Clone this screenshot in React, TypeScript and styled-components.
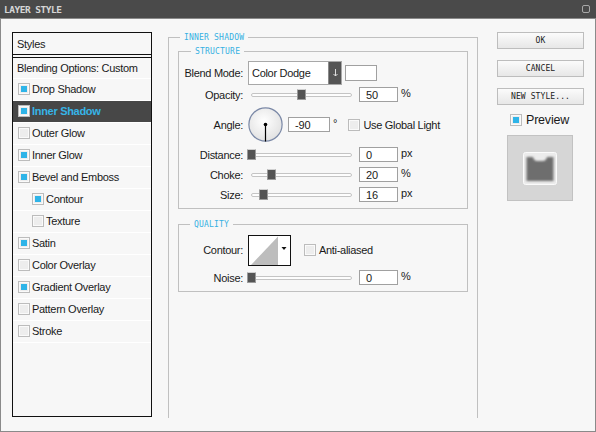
import React from "react";
import styled, { createGlobalStyle } from "styled-components";

const GlobalStyle = createGlobalStyle`
  html, body {
    margin: 0;
    padding: 0;
    background: #f7f7f7;
  }
  body {
    font-family: "Liberation Sans", Arial, sans-serif;
    font-size: 11px;
    color: #1a1a1a;
  }
`;

const Window = styled.div`
  width: 596px;
  height: 432px;
  display: flex;
  flex-direction: column;
  background: #f7f7f7;
`;

const TitleBar = styled.div`
  height: 18px;
  flex: none;
  background: #4a4a4a;
  border-bottom: 1px solid #8a8a8a;
  display: flex;
  align-items: center;
  justify-content: space-between;
  padding: 0 6px 0 4px;
`;

const TitleText = styled.span`
  font-family: "DejaVu Sans Mono", monospace;
  font-weight: bold;
  font-size: 9.5px;
  letter-spacing: -0.5px;
  color: #d6d6d6;
`;

const CloseIcon = styled.span`
  width: 6px;
  height: 6px;
  border: 1px solid #a8a8a8;
  border-radius: 2px;
`;

const Body = styled.div`
  flex: 1;
  display: flex;
  align-items: flex-start;
  border: 1px solid #8a8a8a;
  border-top: none;
  padding-left: 11px;
`;

const StylesPanel = styled.div`
  width: 138px;
  height: 383px;
  margin-top: 13px;
  border: 1px solid #111;
  flex: none;
`;

const PanelHeader = styled.div`
  height: 21px;
  display: flex;
  align-items: center;
  padding-left: 4px;
  border-bottom: 1px solid #111;
  margin-bottom: 2px;
  letter-spacing: -0.3px;
`;

const StyleRow = styled.div<{ $indent?: boolean; $selected?: boolean; $top?: boolean }>`
  height: 21px;
  display: flex;
  align-items: center;
  gap: 2px;
  padding-left: ${(p) => (p.$top ? 4 : p.$indent ? 19 : 5)}px;
  border-top: ${(p) => (p.$top ? "1px solid #111" : "none")};
  border-bottom: 1px solid #ffffff;
  background: ${(p) => (p.$selected ? "#474747" : "transparent")};
  color: ${(p) => (p.$selected ? "#36b4e6" : "#1a1a1a")};
  font-weight: ${(p) => (p.$selected ? "bold" : "normal")};
  letter-spacing: -0.3px;
  line-height: 12px;
  padding-bottom: 1px;
  box-sizing: border-box;
  height: 22px;
`;

const Check = styled.span<{ $checked?: boolean }>`
  width: 10px;
  height: 10px;
  flex: none;
  border: 1px solid #bcbcbc;
  background: #ededed;
  box-shadow: inset 0 0 0 1px #fafafa;
  display: flex;
  align-items: center;
  justify-content: center;
  &::after {
    content: "";
    width: 6px;
    height: 6px;
    background: ${(p) => (p.$checked ? "#2eb4e8" : "transparent")};
  }
`;

const Middle = styled.div`
  margin-left: 16px;
  margin-top: 18px;
  width: 290px;
  height: 367px;
  flex: none;
  border: 1px solid #c0c0c0;
  border-bottom: none;
  position: relative;
  padding: 13px 9px 0 9px;
`;

const Group = styled.div<{ $mt?: number }>`
  position: relative;
  border: 1px solid #c0c0c0;
  margin-top: ${(p) => p.$mt ?? 0}px;
  padding-bottom: 6px;
`;

const Legend = styled.span<{ $left: number }>`
  position: absolute;
  top: -5px;
  left: ${(p) => p.$left}px;
  padding: 0 4px;
  background: #f7f7f7;
  font-family: "DejaVu Sans Mono", monospace;
  font-size: 8px;
  line-height: 9px;
  letter-spacing: 0.2px;
  color: #36b0e2;
`;

const Row = styled.div<{ $h: number; $mt: number }>`
  height: ${(p) => p.$h}px;
  margin-top: ${(p) => p.$mt}px;
  display: flex;
  align-items: center;
`;

const Label = styled.span`
  width: 64px;
  flex: none;
  text-align: right;
  margin-right: 5px;
  letter-spacing: -0.3px;
`;

const Select = styled.div`
  width: 92px;
  height: 22px;
  border: 1px solid #a8a8a8;
  background: #fff;
  display: flex;
  align-items: stretch;
`;

const SelectText = styled.span`
  flex: 1;
  display: flex;
  align-items: center;
  padding-left: 3px;
  letter-spacing: -0.3px;
`;

const SelectButton = styled.span`
  width: 12px;
  background: #555;
  border-left: 1px solid #8a8a8a;
  display: flex;
  align-items: center;
  justify-content: center;
`;

const Swatch = styled.span`
  width: 30px;
  height: 14px;
  margin-left: 3px;
  border: 1px solid #a0a0a0;
  background: #fff;
`;

const SliderWrap = styled.div`
  position: relative;
  width: 101px;
  height: 15px;
  margin-left: 3px;
  display: flex;
  align-items: center;
`;

const Track = styled.div`
  width: 100%;
  height: 4px;
  border: 1px solid #c4c4c4;
  border-radius: 2px;
  background: #fdfdfd;
  box-sizing: border-box;
`;

const Thumb = styled.span`
  position: absolute;
  top: 2px;
  width: 7px;
  height: 9px;
  margin-left: -4.5px;
  background: #545454;
  border: 1px solid #9a9a9a;
  border-top-color: #d0d0d0;
  border-radius: 1px;
`;

const Field = styled.div<{ $w?: number; $ml?: number }>`
  width: ${(p) => p.$w ?? 37}px;
  height: 13px;
  margin-left: ${(p) => p.$ml ?? 7}px;
  border: 1px solid #a0a0a0;
  background: #fff;
  display: flex;
  align-items: center;
`;

const FieldText = styled.span`
  padding-left: 6px;
  letter-spacing: -0.2px;
`;

const Unit = styled.span<{ $up?: number }>`
  margin-left: 3px;
  margin-bottom: ${(p) => p.$up ?? 3}px;
`;

const CheckLabel = styled.label<{ $ml: number }>`
  display: flex;
  align-items: center;
  gap: 3px;
  margin-left: ${(p) => p.$ml}px;
  letter-spacing: -0.3px;
`;

const Right = styled.div`
  margin-left: 19px;
  margin-top: 13px;
  width: 87px;
  display: flex;
  flex-direction: column;
  flex: none;
`;

const Button = styled.button<{ $mt?: number }>`
  width: 87px;
  height: 17px;
  margin-top: ${(p) => p.$mt ?? 0}px;
  padding: 0;
  border: 1px solid #bdbdbd;
  background: linear-gradient(#fbfbfb, #e7e7e7);
  font-family: "DejaVu Sans Mono", monospace;
  font-size: 8px;
  letter-spacing: 0.1px;
  color: #222;
`;

const PreviewRow = styled.div`
  display: flex;
  align-items: center;
  gap: 4px;
  margin: 8px 0 0 13px;
  font-size: 12.5px;
  letter-spacing: -0.2px;
`;

const PreviewBox = styled.div`
  width: 64px;
  height: 64px;
  margin: 8px 0 0 10px;
  border: 1px solid #c2c2c2;
  background: #d6d6d6;
  display: flex;
  align-items: center;
  justify-content: center;
`;

type StyleItem = { name: string; checked: boolean; indent?: boolean; selected?: boolean };

const styleItems: StyleItem[] = [
  { name: "Drop Shadow", checked: true },
  { name: "Inner Shadow", checked: true, selected: true },
  { name: "Outer Glow", checked: false },
  { name: "Inner Glow", checked: true },
  { name: "Bevel and Emboss", checked: true },
  { name: "Contour", checked: true, indent: true },
  { name: "Texture", checked: false, indent: true },
  { name: "Satin", checked: true },
  { name: "Color Overlay", checked: false },
  { name: "Gradient Overlay", checked: true },
  { name: "Pattern Overlay", checked: false },
  { name: "Stroke", checked: false },
];

const Slider = ({ pos }: { pos: number }) => (
  <SliderWrap>
    <Track />
    <Thumb style={{ left: `${pos * 100}%` }} />
  </SliderWrap>
);

const ValueRow = ({ label, pos, value, unit, mt }: { label: string; pos: number; value: string; unit: string; mt: number }) => (
  <Row $h={15} $mt={mt}>
    <Label>{label}</Label>
    <Slider pos={pos} />
    <Field>
      <FieldText>{value}</FieldText>
    </Field>
    <Unit>{unit}</Unit>
  </Row>
);

const Dial = () => (
  <svg width="35" height="35" viewBox="0 0 35 35">
    <defs>
      <radialGradient id="dialFill" cx="45%" cy="40%" r="60%">
        <stop offset="0%" stopColor="#ffffff" />
        <stop offset="100%" stopColor="#e2e2e2" />
      </radialGradient>
    </defs>
    <circle cx="17.5" cy="17.5" r="16.6" fill="url(#dialFill)" stroke="#7a88a6" strokeWidth="1.2" />
    <line x1="17.5" y1="17.5" x2="17.5" y2="34.5" stroke="#000" strokeWidth="1.2" />
    <circle cx="17.5" cy="17.5" r="1.8" fill="#000" />
  </svg>
);

const ContourPicker = () => (
  <svg width="43" height="31" viewBox="0 0 43 31">
    <rect x="0.5" y="0.5" width="42" height="30" fill="#fff" stroke="#111" />
    <polygon points="3,30 30,1.5 30,30" fill="#bdbdbd" />
    <polygon points="33.5,12 38.5,12 36,15" fill="#111" />
  </svg>
);

const PreviewTile = () => (
  <svg width="34" height="33" viewBox="0 0 34 33">
    <defs>
      <filter id="soft" x="-20%" y="-20%" width="140%" height="140%">
        <feGaussianBlur stdDeviation="1" />
      </filter>
    </defs>
    <rect x="0.5" y="0.5" width="33" height="32" rx="2" fill="#ececec" stroke="#fbfbfb" />
    <path d="M3.5 5 H10 Q11 9 14 9 H20 Q23 9 24 5 H30.5 V29 H3.5 Z" fill="#6e6e6e" filter="url(#soft)" />
  </svg>
);

const App = () => {
  return (
    <>
      <GlobalStyle />
      <Window>
        <TitleBar>
          <TitleText>LAYER STYLE</TitleText>
          <CloseIcon />
        </TitleBar>
        <Body>
          <StylesPanel>
            <PanelHeader>Styles</PanelHeader>
            <StyleRow $top>Blending Options: Custom</StyleRow>
            {styleItems.map((item) => (
              <StyleRow key={item.name} $indent={item.indent} $selected={item.selected}>
                <Check $checked={item.checked} />
                {item.name}
              </StyleRow>
            ))}
          </StylesPanel>

          <Middle>
            <Legend $left={11}>INNER SHADOW</Legend>
            <Group>
              <Legend $left={12}>STRUCTURE</Legend>
              <Row $h={23} $mt={9}>
                <Label>Blend Mode:</Label>
                <Select>
                  <SelectText>Color Dodge</SelectText>
                  <SelectButton>
                    <svg width="7" height="9" viewBox="0 0 7 9">
                      <line x1="3.5" y1="1" x2="3.5" y2="8" stroke="#ddd" strokeWidth="1" />
                      <polyline points="1.5,6 3.5,8 5.5,6" fill="none" stroke="#ddd" strokeWidth="1" />
                    </svg>
                  </SelectButton>
                </Select>
                <Swatch />
              </Row>
              <ValueRow label="Opacity:" pos={0.5} value="50" unit="%" mt={3} />
              <Row $h={35} $mt={5}>
                <Label>Angle:</Label>
                <Dial />
                <Field $w={40} $ml={5}>
                  <FieldText>-90</FieldText>
                </Field>
                <Unit $up={4}>°</Unit>
                <CheckLabel $ml={11}>
                  <Check />
                  Use Global Light
                </CheckLabel>
              </Row>
              <ValueRow label="Distance:" pos={0} value="0" unit="px" mt={5} />
              <ValueRow label="Choke:" pos={0.2} value="20" unit="%" mt={5} />
              <ValueRow label="Size:" pos={0.12} value="16" unit="px" mt={5} />
            </Group>

            <Group $mt={15}>
              <Legend $left={11}>QUALITY</Legend>
              <Row $h={30} $mt={10}>
                <Label>Contour:</Label>
                <ContourPicker />
                <CheckLabel $ml={13}>
                  <Check />
                  Anti-aliased
                </CheckLabel>
              </Row>
              <ValueRow label="Noise:" pos={0} value="0" unit="%" mt={5} />
            </Group>
          </Middle>

          <Right>
            <Button>OK</Button>
            <Button $mt={11}>CANCEL</Button>
            <Button $mt={11}>NEW STYLE...</Button>
            <PreviewRow>
              <Check $checked />
              Preview
            </PreviewRow>
            <PreviewBox>
              <PreviewTile />
            </PreviewBox>
          </Right>
        </Body>
      </Window>
    </>
  );
};

export default App;
